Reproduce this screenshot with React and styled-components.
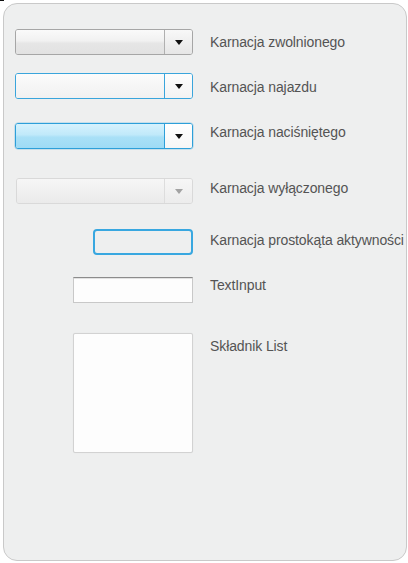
import React from 'react'
import styled, { createGlobalStyle, css } from 'styled-components'

const GlobalStyle = createGlobalStyle`
  html, body {
    margin: 0;
    padding: 0;
    background: #ffffff;
  }
  body {
    font-family: "Liberation Sans", Arial, sans-serif;
  }
`;

const Page = styled.div`
  width: 408px;
  height: 563px;
  overflow: hidden;
`;

const Mark = styled.div`
  width: 4px;
  height: 1px;
  background: #111;
`;

const Panel = styled.div`
  box-sizing: border-box;
  margin: 2px 0 0 3px;
  width: 404px;
  height: 558px;
  padding-top: 25px;
  border: 1px solid #c9c9c9;
  border-radius: 14px;
  background: #eeefef;
`;

const Row = styled.div`
  display: flex;
  align-items: flex-start;
  margin-top: ${p => p.$gap || 0}px;
`;

const ControlCol = styled.div`
  width: 189px;
  display: flex;
  justify-content: flex-end;
  flex-shrink: 0;
`;

const Label = styled.div`
  margin-left: 17px;
  margin-top: ${p => p.$offset || 0}px;
  font-size: 14px;
  line-height: 16px;
  letter-spacing: -0.1px;
  color: #545454;
  white-space: nowrap;
`;

const skins = {
  normal: {
    border: '#a6a6a6',
    field: 'linear-gradient(#fafafa 0%, #f1f1f1 45%, #e6e6e6 55%, #e2e2e2 100%)',
    button: 'linear-gradient(#f8f8f8 0%, #efefef 50%, #e6e6e6 100%)',
    divider: '#b0b0b0',
    arrow: '#111',
  },
  hover: {
    border: '#3aa5dc',
    field: 'linear-gradient(#fcfcfc 0%, #f6f6f6 50%, #f1f1f1 100%)',
    button: 'linear-gradient(#fdfdfd, #f3f3f3)',
    divider: '#3aa5dc',
    arrow: '#111',
  },
  pressed: {
    border: '#2d9fd9',
    field: 'linear-gradient(#d6f2fd 0%, #c0e9fa 45%, #a9e0f7 55%, #9edbf5 100%)',
    button: 'linear-gradient(#ffffff, #f6f6f6)',
    divider: '#2d9fd9',
    arrow: '#111',
  },
  disabled: {
    border: '#d9d9d9',
    field: 'linear-gradient(#f6f6f6 0%, #f0f0f0 50%, #eaeaea 100%)',
    button: 'linear-gradient(#f6f6f6, #ececec)',
    divider: '#dddddd',
    arrow: '#a3a3a3',
  },
};

const Combo = styled.div`
  box-sizing: border-box;
  width: ${p => (p.$state === 'disabled' ? 177 : 178)}px;
  height: 26px;
  display: flex;
  border: 1px solid ${p => skins[p.$state].border};
  border-radius: 3px;
  overflow: hidden;
  ${p => p.$state === 'pressed' && css`box-shadow: 0 0 0 0.5px rgba(45, 159, 217, 0.4);`}
`;

const Field = styled.div`
  flex: 1;
  background: ${p => skins[p.$state].field};
`;

const DropButton = styled.div`
  width: 27px;
  display: flex;
  align-items: center;
  justify-content: center;
  border-left: 1px solid ${p => skins[p.$state].divider};
  background: ${p => skins[p.$state].button};
`;

const Arrow = styled.div`
  width: 0;
  height: 0;
  margin-left: 1px;
  border-left: 4px solid transparent;
  border-right: 4px solid transparent;
  border-top: 5px solid ${p => skins[p.$state].arrow};
`;

const FocusRect = styled.div`
  box-sizing: border-box;
  width: 100px;
  height: 26px;
  border: 2px solid #38a7e0;
  border-radius: 4px;
`;

const TextInput = styled.div`
  box-sizing: border-box;
  width: 120px;
  height: 26px;
  background: #fdfdfd;
  border: 1px solid #c8c8c8;
  border-top-color: #8c8c8c;
  box-shadow: inset 0 1px 0 #e2e2e2;
`;

const ListBox = styled.div`
  box-sizing: border-box;
  width: 120px;
  height: 120px;
  background: #fdfdfd;
  border: 1px solid #d2d2d2;
  border-radius: 2px;
  box-shadow: 0 0 1px rgba(0, 0, 0, 0.08);
`;

function ComboBox({ state }) {
  return (
    <Combo $state={state}>
      <Field $state={state} />
      <DropButton $state={state}>
        <Arrow $state={state} />
      </DropButton>
    </Combo>
  )
}

export default function App() {
  return (
    <Page>
      <GlobalStyle />
      <Mark />
      <Panel>
        <Row>
          <ControlCol><ComboBox state="normal" /></ControlCol>
          <Label $offset={5}>Karnacja zwolnionego</Label>
        </Row>
        <Row $gap={18}>
          <ControlCol><ComboBox state="hover" /></ControlCol>
          <Label $offset={6}>Karnacja najazdu</Label>
        </Row>
        <Row $gap={24}>
          <ControlCol><ComboBox state="pressed" /></ControlCol>
          <Label $offset={1}>Karnacja naciśniętego</Label>
        </Row>
        <Row $gap={29}>
          <ControlCol><ComboBox state="disabled" /></ControlCol>
          <Label $offset={2}>Karnacja wyłączonego</Label>
        </Row>
        <Row $gap={25}>
          <ControlCol><FocusRect /></ControlCol>
          <Label $offset={3}>Karnacja prostokąta aktywności</Label>
        </Row>
        <Row $gap={22}>
          <ControlCol><TextInput /></ControlCol>
          <Label $offset={0}>TextInput</Label>
        </Row>
        <Row $gap={30}>
          <ControlCol><ListBox /></ControlCol>
          <Label $offset={5}>Składnik List</Label>
        </Row>
      </Panel>
    </Page>
  )
}
